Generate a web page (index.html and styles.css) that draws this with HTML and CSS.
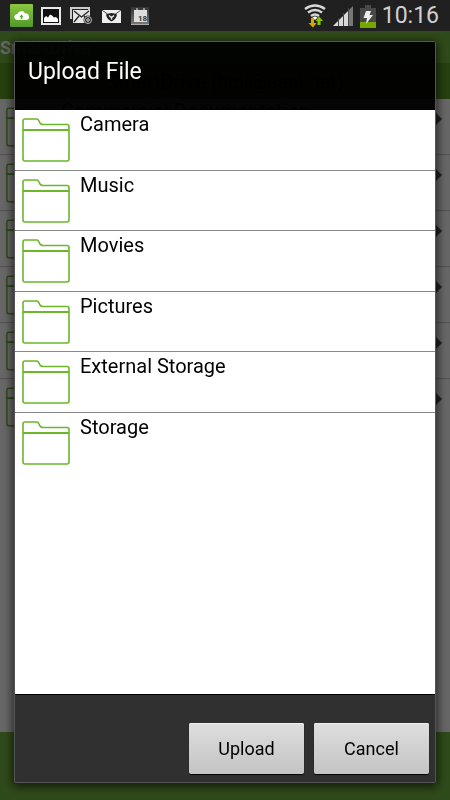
FILE: index.html
```html
<!DOCTYPE html>
<html lang="en">
<head>
  <meta charset="UTF-8">
  <meta name="viewport" content="width=device-width, initial-scale=1.0">
  <title>SmartDrive</title>
  <link rel="stylesheet" href="styles.css">
</head>
<body>
  <!-- Shared icons -->
  <svg class="sprite" aria-hidden="true">
    <symbol id="folder" viewBox="0 0 48 44">
      <path d="M1 41V3q0-2 2-2h12q1 0 2 2l1 2q1 1.500 3 1.500h24q2 0 2 2V41q0 2-2 2H3q-2 0-2-2z" fill="none" stroke="currentColor" stroke-width="1.600"/>
      <path d="M1 12h46" stroke="currentColor" stroke-width="2"/>
    </symbol>
    <symbol id="arrow" viewBox="0 0 6 12">
      <path d="M0 0l6 6-6 6z" fill="currentColor"/>
    </symbol>
  </svg>

  <div class="status-bar">
    <div class="notifications">
      <svg width="24" height="24" viewBox="0 0 24 24">
        <defs>
          <linearGradient id="cloudBg" x1="0" y1="0" x2="0" y2="1">
            <stop offset="0" stop-color="#8cc63f"/>
            <stop offset="1" stop-color="#4f9a28"/>
          </linearGradient>
        </defs>
        <rect x="0" y="0" width="23" height="23" rx="1" fill="url(#cloudBg)"/>
        <path d="M7 16a3 3 0 0 1-2-5q1-1 2.500-1A4 4 0 0 1 15 9.500a3.300 3.300 0 0 1 1.500 6.500z" fill="#fff"/>
        <path d="M11.500 10.500l2 2.500h-1.200v2h-1.600v-2H9.500z" fill="#5fa52c"/>
      </svg>
      <svg width="22" height="20" viewBox="0 0 22 20">
        <rect x="1" y="2" width="18" height="16" fill="#111" stroke="#e8e8e8" stroke-width="2"/>
        <path d="M3 16v-4l2-2 2 1.500 2-3 2 1 2 2 2-.5 2 2v3z" fill="#fff"/>
      </svg>
      <svg width="24" height="20" viewBox="0 0 24 20">
        <path d="M1 13V2h18v2" fill="none" stroke="#ccc" stroke-width="2"/>
        <rect x="3" y="4" width="17" height="13" fill="#e4e4e4"/>
        <path d="M4 5l7.500 6L19 5M4 16l5-6M19 16l-5-6" fill="none" stroke="#222" stroke-width="1.300"/>
        <circle cx="18" cy="14" r="4.500" fill="#222"/>
        <circle cx="18" cy="14" r="3.500" fill="none" stroke="#bbb"/>
        <circle cx="18" cy="14" r="1.300" fill="none" stroke="#ddd"/>
      </svg>
      <svg width="22" height="20" viewBox="0 0 22 20">
        <rect x="1" y="4" width="19" height="13" fill="#eee"/>
        <path d="M1 4l9.500 7L20 4" fill="none" stroke="#444"/>
        <path d="M5 8.500q5.500-3 11 0-1 5-5.500 7Q6 13.500 5 8.500z" fill="#222"/>
        <path d="M8 9.500l2.500 2 2.500-2M10.500 11v2.500" fill="none" stroke="#eee" stroke-width="1.400"/>
      </svg>
      <svg width="20" height="20" viewBox="0 0 20 20">
        <defs>
          <linearGradient id="calBg" x1="0" y1="0" x2="0" y2="1">
            <stop offset="0" stop-color="#333"/>
            <stop offset="1" stop-color="#777"/>
          </linearGradient>
        </defs>
        <rect x="1" y="1" width="18" height="17" fill="url(#calBg)"/>
        <path d="M1 18.500h18" stroke="#aaa"/>
        <rect x="4" y="4" width="13" height="12" fill="#ddd"/>
        <path d="M7 2v3M14 2v3" stroke="#eee"/>
        <text class="cal-day" x="8" y="15">18</text>
      </svg>
    </div>
    <div class="system">
      <svg width="22" height="24" viewBox="0 0 22 24">
        <g fill="none" stroke="#d8d8d8" stroke-width="2.500">
          <path d="M1 5Q11-2 21 5"/>
          <path d="M4 8.500q7-5 14 0"/>
          <path d="M7 12q4-3 8 0"/>
        </g>
        <path d="M8.500 13.500q2.500-2 5 0L11 16z" fill="#fff"/>
        <path d="M7 14h3v5h2.500L9 23.500 4.500 19H7z" fill="#d9a400"/>
        <path d="M13.500 21h3v-4H19l-4-4.500-3.500 4.500h2z" fill="#85c400"/>
      </svg>
      <svg width="22" height="22" viewBox="0 0 22 22">
        <path d="M1 21L16 6v15z" fill="#d8d8d8"/>
        <path d="M17 5l4-4v20h-4z" fill="#777"/>
        <path d="M6.500 13v8M11.500 8v13M16.500 3v18" stroke="#444"/>
      </svg>
      <svg width="16" height="23" viewBox="0 0 16 23">
        <path d="M0 3h5V0h6v3h5v20H0z" fill="#484848"/>
        <path d="M0 17h16v6H0z" fill="#74a800"/>
        <path d="M6 6h5L9.500 10H13L6 19l1-6H3.500z" fill="#eee"/>
      </svg>
      <span class="clock">10:16</span>
    </div>
  </div>

  <div class="app">
    <div class="app-header">SmartDrive</div>
    <div class="account">SmartDrive (hcli@easi.net)</div>
    <ul class="drive-list">
      <li><svg class="folder"><use href="#folder"/></svg><span>Commercial Documentation</span><svg class="arrow"><use href="#arrow"/></svg></li>
      <li><svg class="folder"><use href="#folder"/></svg><span></span><svg class="arrow"><use href="#arrow"/></svg></li>
      <li><svg class="folder"><use href="#folder"/></svg><span></span><svg class="arrow"><use href="#arrow"/></svg></li>
      <li><svg class="folder"><use href="#folder"/></svg><span></span><svg class="arrow"><use href="#arrow"/></svg></li>
      <li><svg class="folder"><use href="#folder"/></svg><span></span><svg class="arrow"><use href="#arrow"/></svg></li>
      <li><svg class="folder"><use href="#folder"/></svg><span></span><svg class="arrow"><use href="#arrow"/></svg></li>
    </ul>
    <div class="app-footer"></div>
  </div>

  <div class="overlay">
    <div class="dialog" role="dialog" aria-labelledby="dialogTitle">
      <h1 class="dialog-title" id="dialogTitle">Upload File</h1>
      <ul class="file-list">
        <li><svg class="folder"><use href="#folder"/></svg><span>Camera</span></li>
        <li><svg class="folder"><use href="#folder"/></svg><span>Music</span></li>
        <li><svg class="folder"><use href="#folder"/></svg><span>Movies</span></li>
        <li><svg class="folder"><use href="#folder"/></svg><span>Pictures</span></li>
        <li><svg class="folder"><use href="#folder"/></svg><span>External Storage</span></li>
        <li><svg class="folder"><use href="#folder"/></svg><span>Storage</span></li>
      </ul>
      <div class="dialog-buttons">
        <button type="button">Upload</button>
        <button type="button">Cancel</button>
      </div>
    </div>
  </div>
</body>
</html>
```

FILE: styles.css
```css
* {
  margin: 0;
  padding: 0;
  box-sizing: border-box;
}

body {
  font-family: Roboto, "Liberation Sans", sans-serif;
  display: flex;
  flex-direction: column;
  height: 100vh;
  overflow: hidden;
  background-color: #fff;
  color: #000;
}

ul {
  list-style: none;
}

svg {
  display: block;
  flex-shrink: 0;
}

.sprite {
  position: absolute;
  width: 0;
  height: 0;
}

.folder {
  width: 48px;
  height: 44px;
  color: #6cb62c;
}

/* Status bar */
.status-bar {
  position: relative;
  z-index: 20;
  height: 31px;
  padding: 1px 11px 0 10px;
  background-color: #202020;
  display: flex;
  justify-content: space-between;
  align-items: center;
}

.notifications {
  display: flex;
  align-items: center;
  gap: 7px;
}

.system {
  display: flex;
  align-items: center;
  gap: 6px;
}

.clock {
  font-size: 23px;
  line-height: 30px;
  color: #d0d0d0;
}

.cal-day {
  font-size: 8px;
  font-weight: bold;
  fill: #333;
}

/* App behind the dialog */
.app {
  flex-grow: 1;
  display: flex;
  flex-direction: column;
}

.app-header {
  height: 32px;
  line-height: 34px;
  background-color: #76b941;
  color: #fff;
  font-size: 18px;
  font-weight: bold;
}

.account {
  height: 36px;
  line-height: 38px;
  background-color: #5fa028;
  text-align: center;
  font-size: 20px;
}

.drive-list {
  flex-grow: 1;
}

.drive-list li {
  display: flex;
  align-items: center;
  height: 56px;
  padding: 0 8px 0 6px;
  border-bottom: 1px solid #ccc;
  font-size: 20px;
}

.drive-list li:last-child {
  border-bottom: none;
}

.drive-list span {
  flex-grow: 1;
  align-self: flex-start;
  padding-left: 12px;
}

.drive-list .folder {
  width: 43px;
  height: 40px;
}

.arrow {
  width: 6px;
  height: 12px;
  margin-bottom: 16px;
  color: #555;
}

.app-footer {
  height: 68px;
  background-color: #76b941;
}

/* Upload dialog */
.overlay {
  position: fixed;
  inset: 31px 0 0;
  z-index: 10;
  display: flex;
  padding: 10px 14px 17px;
  background-color: rgba(0, 0, 0, 0.6);
}

.dialog {
  flex-grow: 1;
  display: flex;
  flex-direction: column;
  border: 1px solid #555;
  border-radius: 2px;
  box-shadow: 0 2px 10px 2px rgba(0, 0, 0, 0.6);
}

.dialog-title {
  height: 68px;
  padding: 0 13px;
  line-height: 60px;
  background-color: rgba(0, 0, 0, 0.95);
  color: #fff;
  font-size: 23px;
  font-weight: normal;
}

.file-list {
  flex-grow: 1;
  background-color: #fff;
}

.file-list li {
  display: flex;
  gap: 10px;
  height: 61px;
  padding: 0 7px;
  border-bottom: 1px solid #888;
  font-size: 20px;
  line-height: 29px;
}

.file-list li:nth-child(even) {
  height: 60px;
}

.file-list li:last-child {
  border-bottom: none;
}

.file-list .folder {
  margin-top: 8px;
}

.dialog-buttons {
  display: flex;
  justify-content: flex-end;
  gap: 10px;
  padding: 28px 6px 8px 5px;
  background-color: #303030;
  border-top: 1px solid #000;
}

.dialog-buttons button {
  min-width: 115px;
  height: 51px;
  border: none;
  border-radius: 2px;
  background: linear-gradient(#dedede, #c4c4c4);
  box-shadow: 0 1px 1px #000, inset 0 1px 0 #eee;
  color: #000;
  font-family: inherit;
  font-size: 18px;
  cursor: pointer;
}

.dialog-buttons button:active {
  background: #b0b0b0;
}
```
